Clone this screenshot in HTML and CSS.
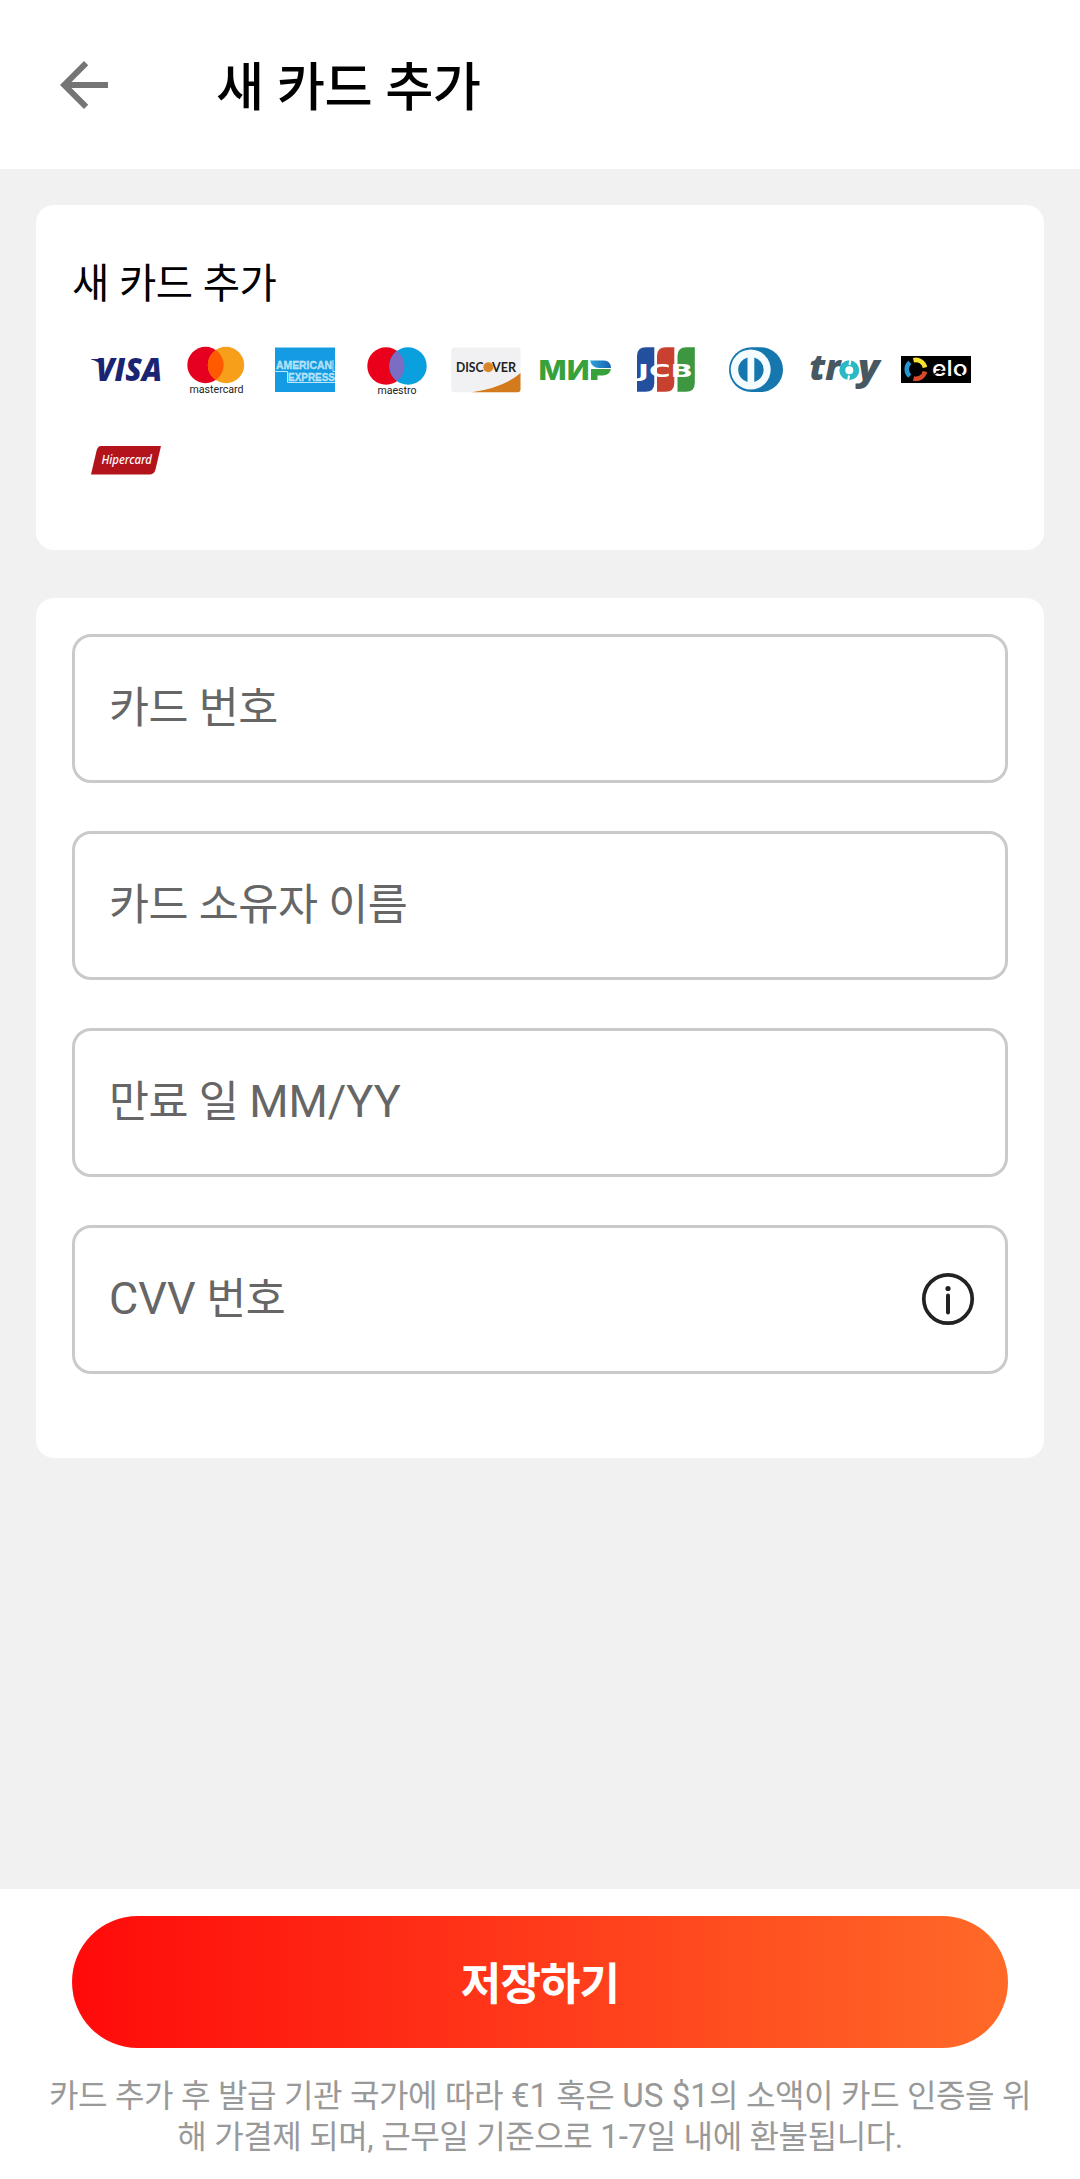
FILE: index.html
```html
<!doctype html>
<html lang="ko">
	<head>
		<meta charset="utf-8">
		<title>새 카드 추가</title>
		<link rel="stylesheet" href="styles.css">
	</head>
	<body>
		<header class="topbar">
			<svg class="back" viewBox="0 0 24 24"><path d="M20 11H7.83l5.59-5.59L12 4l-8 8 8 8 1.41-1.41L7.83 13H20z"/></svg>
			<h1>새 카드 추가</h1>
		</header>

		<main>
			<section class="card brands">
				<h2>새 카드 추가</h2>
				<div class="logos">
					<!-- visa -->
					<svg viewBox="0 0 90 90">
						<path d="M10 34h9l3 8c-3-4-7-6.500-12-7.500z" fill="#1a2472"/>
						<text x="15" y="56" class="open" font-size="31" font-weight="800" font-style="italic" textLength="66" lengthAdjust="spacingAndGlyphs" fill="#1a2472">VISA</text>
					</svg>
					<!-- mastercard -->
					<svg viewBox="0 0 90 90">
						<circle cx="34.500" cy="40" r="18.200" fill="#e6001f"/>
						<circle cx="55" cy="40" r="18.200" fill="#f79e1b"/>
						<path d="M44.750 25a18.200 18.200 0 0 1 0 30a18.200 18.200 0 0 1 0-30z" fill="#ff5a00"/>
						<text x="18.500" y="67.500" font-size="10" textLength="54" lengthAdjust="spacingAndGlyphs" fill="#222">mastercard</text>
					</svg>
					<!-- american express -->
					<svg viewBox="0 0 90 90">
						<rect x="14" y="22.500" width="60" height="44.500" fill="#149be1"/>
						<g class="amex">
							<text x="15" y="44" textLength="56" lengthAdjust="spacingAndGlyphs">AMERICAN</text>
							<text x="27" y="56" textLength="47" lengthAdjust="spacingAndGlyphs">EXPRESS</text>
						</g>
						<path d="M14 46.500h12.500v11H74M72 35v11.500h2" fill="none" stroke="#bfe6fa" stroke-width="1"/>
					</svg>
					<!-- maestro -->
					<svg viewBox="0 0 90 90">
						<circle cx="35" cy="41" r="18.700" fill="#eb001b"/>
						<circle cx="57" cy="41" r="18.700" fill="#0a9fdd"/>
						<path d="M46 26a18.700 18.700 0 0 1 0 30a18.700 18.700 0 0 1 0-30z" fill="#7b6cc4"/>
						<text x="26.500" y="69" font-size="10" textLength="39" lengthAdjust="spacingAndGlyphs" fill="#222">maestro</text>
					</svg>
					<!-- discover -->
					<svg viewBox="0 0 90 90">
						<rect x="10.300" y="22.600" width="69.200" height="44.700" rx="3" fill="#f1f1f4"/>
						<path d="M31 67.300Q64 62 79.500 48v16.300a3 3 0 0 1-3 3z" fill="#d27a1c"/>
						<text x="15" y="47" class="lato" font-size="13.500" font-weight="700" textLength="27.500" lengthAdjust="spacingAndGlyphs" fill="#222">DISC</text>
						<circle cx="47.300" cy="42.300" r="5" fill="#d9862b"/>
						<text x="51" y="47" class="lato" font-size="13.500" font-weight="700" textLength="24" lengthAdjust="spacingAndGlyphs" fill="#222">VER</text>
					</svg>
					<!-- mir -->
					<svg viewBox="0 0 90 90">
						<defs>
							<linearGradient id="mir"><stop offset="0" stop-color="#2fa4dc"/><stop offset="1" stop-color="#1561ae"/></linearGradient>
						</defs>
						<text x="7.500" y="55" class="inter" font-size="27" font-weight="800" textLength="51" lengthAdjust="spacingAndGlyphs" fill="#37a13b">МИ</text>
						<path d="M60 44h20q-1.500 6.500-8.500 6.500h-5V55H60z" fill="#37a13b"/>
						<path d="M59 35.500h14q6.500 0 7 7.500H68q-7 0-9-7.500z" fill="url(#mir)"/>
					</svg>
					<!-- jcb -->
					<svg viewBox="0 0 90 90">
						<path d="M16 31q0-8.700 8.700-8.700h8.600V58q0 8.700-8.700 8.700H16z" fill="#23509e"/>
						<path d="M36 31q0-8.700 8.700-8.700h8.600V58q0 8.700-8.700 8.700H36z" fill="#c8402f"/>
						<path d="M56.500 31q0-8.700 8.700-8.700h8.600V58q0 8.700-8.700 8.700h-8.600z" fill="#3d9640"/>
						<text x="17" y="51.500" class="dejavu" font-size="18.500" font-weight="700" textLength="55" lengthAdjust="spacingAndGlyphs" fill="#fff">JCB</text>
					</svg>
					<!-- diners club -->
					<svg viewBox="0 0 90 90">
						<rect x="18" y="22.300" width="54" height="44.700" rx="22.300" fill="#1577ae"/>
						<circle cx="39.700" cy="44.600" r="20" fill="#f5fcff"/>
						<path d="M36.500 32.500v24.500a12.700 12.700 0 0 1 0-24.500zM43.300 32.500v24.500a12.700 12.700 0 0 0 0-24.500z" fill="#1577ae"/>
					</svg>
					<!-- troy -->
					<svg viewBox="0 0 90 90">
						<g class="open" font-size="35" font-weight="800" font-style="italic" fill="#475862">
							<text x="8.500" y="55" textLength="31" lengthAdjust="spacingAndGlyphs">tr</text>
							<text x="57" y="55" textLength="21.500" lengthAdjust="spacingAndGlyphs">y</text>
						</g>
						<circle cx="48.300" cy="45.300" r="7" fill="none" stroke="#2bb9c4" stroke-width="6"/>
						<path d="M49.500 34l-1 6M48 50.500l-1 6" stroke="#fff" stroke-width="2"/>
					</svg>
					<!-- elo -->
					<svg viewBox="0 0 90 90">
						<rect x="10" y="31" width="70" height="27" fill="#000"/>
						<g fill="none" stroke-width="4.500">
							<path d="M22.500 35.200A9.300 9.300 0 0 1 34 42.500" stroke="#f7e32f"/>
							<path d="M34 46.500A9.300 9.300 0 0 1 22.500 53.500" stroke="#d94a2c"/>
							<path d="M18.800 51.200A9.300 9.300 0 0 1 18.800 37.400" stroke="#2497d4"/>
						</g>
						<text x="41" y="51" class="inter" font-size="22" font-weight="500" textLength="35.500" lengthAdjust="spacingAndGlyphs" fill="#fff">elo</text>
						<path d="M68.500 47.500l5 5M43 49.500l9-6" stroke="#000" stroke-width="1.200"/>
					</svg>
					<!-- hipercard -->
					<svg viewBox="0 0 90 90">
						<path d="M20 31h60l-5.500 23.500q-1.200 5-6.500 5H10l5.500-23.500q1.200-5 4.500-5z" fill="#b3131b"/>
						<text x="20.500" y="49.300" class="noto" font-size="13" font-weight="500" font-style="italic" textLength="50.500" lengthAdjust="spacingAndGlyphs" fill="#fff">Hipercard</text>
					</svg>
				</div>
			</section>

			<section class="card form">
				<div class="field">카드 번호</div>
				<div class="field">카드 소유자 이름</div>
				<div class="field"><span>만료 일 <span class="latin">MM/YY</span></span></div>
				<div class="field">
					<span><span class="latin">CVV</span> 번호</span>
					<svg class="info" viewBox="0 0 54 54">
						<circle cx="27" cy="27" r="24.200" fill="none" stroke="#222" stroke-width="3.700"/>
						<circle cx="27" cy="16.500" r="2.600" fill="#222"/>
						<path d="M27 23.500v17" stroke="#222" stroke-width="4" stroke-linecap="round"/>
					</svg>
				</div>
			</section>
		</main>

		<footer>
			<button class="save">저장하기</button>
			<p>카드 추가 후 발급 기관 국가에 따라 <span class="latin">€1</span> 혹은 <span class="latin">US $1</span>의 소액이 카드 인증을 위<br>해 가결제 되며, 근무일 기준으로 <span class="latin">1-7</span>일 내에 환불됩니다.</p>
		</footer>
	</body>
</html>
```

FILE: styles.css
```css
* {
	box-sizing: border-box;
}
html, body {
	margin: 0;
	padding: 0;
}
body {
	display: flex;
	flex-direction: column;
	height: 2179px;
	background: #f1f1f1;
	font-family: Roboto, "Noto Sans CJK KR", sans-serif;
	/* tighten hangul, but keep the normal word gap */
	letter-spacing: -0.031em;
	word-spacing: 0.031em;
}
.latin, svg text {
	letter-spacing: 0;
	word-spacing: 0;
}
/* hangul is set a little smaller than the latin beside it */
.latin {
	font-size: 1.034em;
}

.topbar {
	display: flex;
	align-items: center;
	height: 169px;
	padding: 0 48px;
	background: #fff;
}
.back {
	width: 72px;
	height: 72px;
	margin-right: 96px;
	fill: #757575;
}
h1, h2, p {
	margin: 0;
}
h1 {
	padding-top: 6px;
	font-size: 52.4px;
	font-weight: 500;
	line-height: 72px;
	color: #000;
}

main {
	flex: 1;
	padding: 36px;
}
.card {
	border-radius: 18px;
	background: #fff;
}
.brands {
	height: 345px;
	margin-bottom: 48px;
	padding: 48px 36px 0;
}
h2 {
	height: 72px;
	padding-top: 1px;
	font-size: 40.6px;
	font-weight: 400;
	line-height: 60px;
	color: #000;
}
.logos {
	display: grid;
	grid-template-columns: repeat(10, 90px);
	padding-left: 9px;
}
.logos svg {
	width: 90px;
	height: 90px;
}
.open {
	font-family: "Open Sans", sans-serif;
}
.noto {
	font-family: "Noto Sans", sans-serif;
}
.dejavu {
	font-family: "DejaVu Sans", sans-serif;
}
.lato {
	font-family: Lato, sans-serif;
}
.inter {
	font-family: Inter, sans-serif;
}
.amex {
	font-family: "Liberation Sans", sans-serif;
	font-size: 10px;
	font-weight: bold;
	fill: #a5dcf7;
	stroke: #d5effc;
	stroke-width: 0.3;
}

.form {
	display: flex;
	flex-direction: column;
	gap: 48px;
	height: 860px;
	padding: 36px;
}
.field {
	display: flex;
	align-items: center;
	justify-content: space-between;
	height: 149px;
	padding: 0 30px 9px 34px;
	border: 3px solid #cacaca;
	border-radius: 19px;
	font-size: 43.5px;
	color: #666;
}
.info {
	width: 54px;
	height: 54px;
	margin-top: 8px;
}

footer {
	height: 290px;
	padding: 27px 36px 0;
	background: #fff;
	text-align: center;
}
.save {
	display: block;
	width: 936px;
	height: 132px;
	margin: 0 auto 28px;
	padding: 0 0 3px;
	border: 0;
	border-radius: 66px;
	background: linear-gradient(90deg, #ff0a0a, #ff3a1a 50%, #ff6a28);
	font: bold 44px Roboto, "Noto Sans CJK KR", sans-serif;
	letter-spacing: -0.02em;
	color: #fff;
}
footer p {
	font-size: 32.100px;
	line-height: 39.5px;
	color: #999;
	white-space: nowrap;
}
```
